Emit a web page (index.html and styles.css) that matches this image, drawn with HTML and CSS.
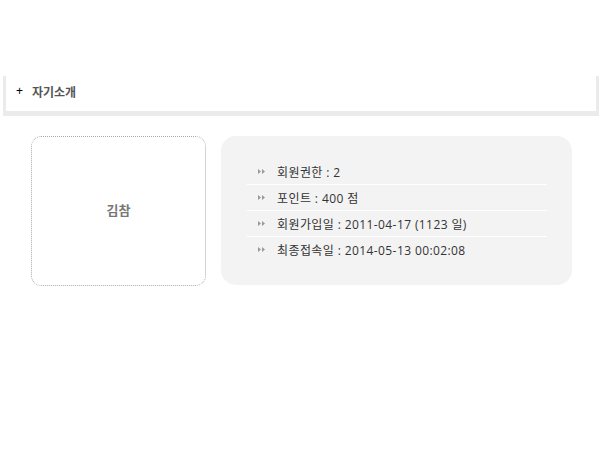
FILE: index.html
```html
<!DOCTYPE html>
<html lang="ko">
<head>
<meta charset="utf-8">
<link rel="stylesheet" href="styles.css">
</head>
<body>
<div class="page">
  <div class="section-head">
    <span class="plus">+</span>
    <span class="head-title">자기소개</span>
  </div>
  <div class="profile">
    <div class="photo">김참</div>
    <div class="info">
      <ul class="info-list">
        <li><span class="arrow"><svg width="7" height="5" viewBox="0 0 7 5"><path d="M0 0 L3 2.5 L0 5 Z M4 0 L7 2.5 L4 5 Z" fill="#9a9a9a"/></svg></span>회원권한 : 2</li>
        <li><span class="arrow"><svg width="7" height="5" viewBox="0 0 7 5"><path d="M0 0 L3 2.5 L0 5 Z M4 0 L7 2.5 L4 5 Z" fill="#9a9a9a"/></svg></span>포인트 : 400 점</li>
        <li><span class="arrow"><svg width="7" height="5" viewBox="0 0 7 5"><path d="M0 0 L3 2.5 L0 5 Z M4 0 L7 2.5 L4 5 Z" fill="#9a9a9a"/></svg></span>회원가입일 : 2011-04-17 (1123 일)</li>
        <li><span class="arrow"><svg width="7" height="5" viewBox="0 0 7 5"><path d="M0 0 L3 2.5 L0 5 Z M4 0 L7 2.5 L4 5 Z" fill="#9a9a9a"/></svg></span>최종접속일 : 2014-05-13 00:02:08</li>
      </ul>
    </div>
  </div>
</div>
</body>
</html>
```
FILE: styles.css
```css
html, body {
  margin: 0;
  padding: 0;
  background: #fff;
}
body {
  font-family: "Open Sans", "Noto Sans CJK KR", sans-serif;
  font-size: 12px;
  color: #333;
}
.page {
  padding-top: 76px;
}
.section-head {
  margin-left: 3px;
  width: 596px;
  height: 40px;
  padding-bottom: 5px;
  box-sizing: border-box;
  border-left: 3px solid #ebebeb;
  border-right: 3px solid #ebebeb;
  border-bottom: 5px solid #ebebeb;
  display: flex;
  align-items: center;
}
.plus {
  margin-left: 10px;
  width: 16px;
  font-size: 12px;
  color: #000;
  font-family: "Liberation Sans", sans-serif;
}
.head-title {
  font-weight: bold;
  font-size: 12px;
  color: #555;
  font-family: "Noto Sans CJK KR", sans-serif;
}
.profile {
  display: flex;
  margin-top: 20px;
  padding-left: 31px;
  gap: 15px;
}
.photo {
  width: 173px;
  height: 145px;
  padding-bottom: 3px;
  border: 1px dotted #aaa;
  border-radius: 10px;
  display: flex;
  align-items: center;
  justify-content: center;
  font-weight: bold;
  font-size: 13px;
  color: #777;
  font-family: "Noto Sans CJK KR", sans-serif;
}
.info {
  width: 351px;
  height: 149px;
  background: #f3f3f3;
  border-radius: 15px;
  padding: 23px 25px 0 26px;
  box-sizing: border-box;
}
.info-list {
  list-style: none;
  margin: 0;
  padding: 0;
}
.info-list li {
  height: 25px;
  border-bottom: 1px solid #fff;
  display: flex;
  align-items: center;
  padding-left: 11px;
  white-space: nowrap;
  letter-spacing: 0.4px;
}
.info-list li:last-child {
  border-bottom: none;
}
.arrow {
  display: inline-flex;
  width: 19px;
}
```
